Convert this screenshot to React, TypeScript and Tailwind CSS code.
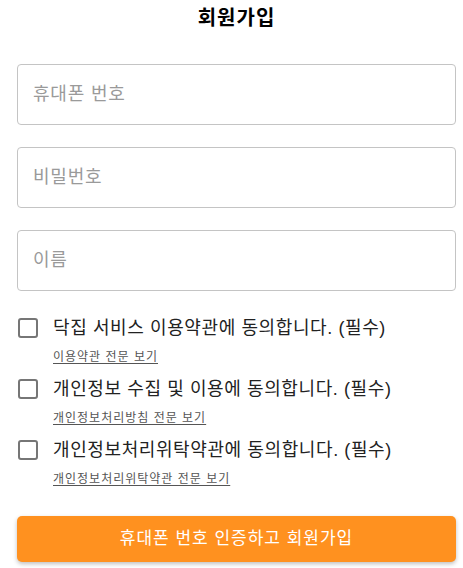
const inputs = ['휴대폰 번호', '비밀번호', '이름']

const agreements = [
  { label: '닥집 서비스 이용약관에 동의합니다. (필수)', link: '이용약관 전문 보기' },
  { label: '개인정보 수집 및 이용에 동의합니다. (필수)', link: '개인정보처리방침 전문 보기' },
  { label: '개인정보처리위탁약관에 동의합니다. (필수)', link: '개인정보처리위탁약관 전문 보기' },
]

export default function App() {
  return (
    <div className="w-[463px] h-[568px] bg-white font-['Liberation_Sans','Noto_Sans_CJK_KR',sans-serif] text-[#111]">
      <div className="ml-[17px] w-[439px]">
        <h1 className="h-[36px] leading-[36px] text-center text-[20px] tracking-[1px] font-bold text-black">회원가입</h1>

        <div className="mt-[28px] flex flex-col gap-[22px]">
          {inputs.map((p) => (
            <input
              key={p}
              placeholder={p}
              className="h-[61px] w-full rounded-[4px] border border-[#c4c4c4] px-[15px] text-[18px] tracking-[0.8px] outline-none placeholder:text-[#9a9a9a]"
            />
          ))}
        </div>

        <div className="mt-[27px] flex flex-col gap-[14px]">
          {agreements.map((a) => (
            <div key={a.link}>
              <label className="flex h-[20px] items-center gap-[15px]">
                <span className="ml-[1px] h-[20px] w-[20px] shrink-0 rounded-[3px] border-2 border-[#767676] bg-white" />
                <span className="whitespace-nowrap text-[18px] leading-[20px] tracking-[0.6px] text-[#222]">{a.label}</span>
              </label>
              <a className="mt-[11px] block pl-[36px] text-[12px] leading-[16px] tracking-[1px] text-[#555] underline underline-offset-2">
                {a.link}
              </a>
            </div>
          ))}
        </div>

        <button className="mt-[29px] h-[46px] w-full rounded-[5px] bg-[#ff911f] text-[17px] tracking-[1px] text-white shadow-[0_2px_4px_rgba(0,0,0,0.25)]">
          휴대폰 번호 인증하고 회원가입
        </button>
      </div>
    </div>
  )
}
